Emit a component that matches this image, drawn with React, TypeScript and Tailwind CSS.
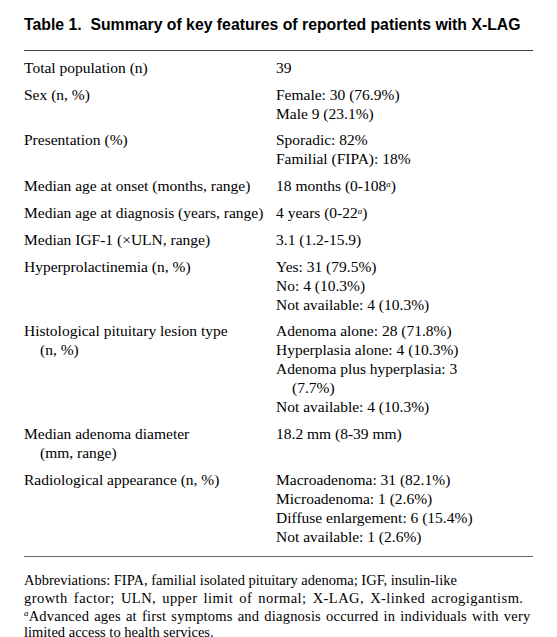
const rows: { label: string[]; value: React.ReactNode[] }[] = [
  { label: ["Total population (n)"], value: ["39"] },
  { label: ["Sex (n, %)"], value: ["Female: 30 (76.9%)", "Male 9 (23.1%)"] },
  { label: ["Presentation (%)"], value: ["Sporadic: 82%", "Familial (FIPA): 18%"] },
  {
    label: ["Median age at onset (months, range)"],
    value: [
      <>
        18 months (0-108<sup className="text-[9px] italic">a</sup>)
      </>,
    ],
  },
  {
    label: ["Median age at diagnosis (years, range)"],
    value: [
      <>
        4 years (0-22<sup className="text-[9px] italic">a</sup>)
      </>,
    ],
  },
  { label: ["Median IGF-1 (\u00d7ULN, range)"], value: ["3.1 (1.2-15.9)"] },
  {
    label: ["Hyperprolactinemia (n, %)"],
    value: ["Yes: 31 (79.5%)", "No: 4 (10.3%)", "Not available: 4 (10.3%)"],
  },
  {
    label: ["Histological pituitary lesion type", "(n, %)"],
    value: [
      "Adenoma alone: 28 (71.8%)",
      "Hyperplasia alone: 4 (10.3%)",
      "Adenoma plus hyperplasia: 3",
      <span className="pl-4">(7.7%)</span>,
      "Not available: 4 (10.3%)",
    ],
  },
  { label: ["Median adenoma diameter", "(mm, range)"], value: ["18.2 mm (8-39 mm)"] },
  {
    label: ["Radiological appearance (n, %)"],
    value: [
      "Macroadenoma: 31 (82.1%)",
      "Microadenoma: 1 (2.6%)",
      "Diffuse enlargement: 6 (15.4%)",
      "Not available: 1 (2.6%)",
    ],
  },
];

export default function App() {
  return (
    <div className="min-h-[637px] w-[557px] bg-white px-6 pt-[15px] font-serif text-black">
      <h1 className="font-[Liberation_Sans,Arial,sans-serif] text-[15.8px] font-bold leading-[19px]">
        Table 1.&nbsp; Summary of key features of reported patients with X-LAG
      </h1>

      <div className="mt-[16px] w-[509px] border-t-[1.5px] border-[#444] pt-[3px] pb-[6px] font-[Liberation_Serif,Times_New_Roman,serif] text-[15.5px] leading-[19px]">
        {rows.map((row, i) => (
          <div key={i} className="grid grid-cols-[252px_1fr] py-[3.9px]">
            <div>
              {row.label.map((l, j) => (
                <div key={j} className={j > 0 ? "pl-4" : ""}>
                  {l}
                </div>
              ))}
            </div>
            <div>
              {row.value.map((v, j) => (
                <div key={j}>{v}</div>
              ))}
            </div>
          </div>
        ))}
      </div>

      <div className="w-[509px] border-t-[1.5px] border-[#666] pt-[15.5px] font-[Liberation_Serif,Times_New_Roman,serif] text-[14.5px] leading-[17.7px]">
        <p>Abbreviations: FIPA, familial isolated pituitary adenoma; IGF, insulin-like</p>
        <p className="tracking-[0.45px] [word-spacing:2px]">
          growth factor; ULN, upper limit of normal; X-LAG, X-linked acrogigantism.
        </p>
        <p className="tracking-[0.2px] [word-spacing:1.3px]">
          <sup className="text-[9px] italic">a</sup>Advanced ages at first symptoms and diagnosis
          occurred in individuals with very
        </p>
        <p className="leading-[14px]">limited access to health services.</p>
      </div>
    </div>
  );
}
